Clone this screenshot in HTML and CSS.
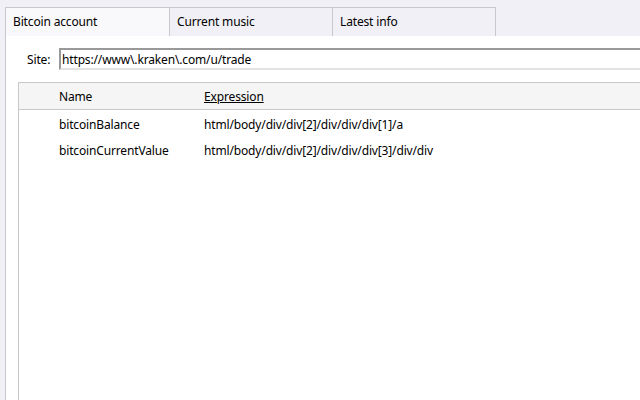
FILE: index.html
```html
<!DOCTYPE html>
<html>
<head>
<meta charset="utf-8">
<link rel="stylesheet" href="styles.css">
</head>
<body>
<div class="window">
  <div class="tabs">
    <div class="tab active">Bitcoin account</div>
    <div class="tab">Current music</div>
    <div class="tab">Latest info</div>
  </div>
  <div class="panel">
    <div class="site-row">
      <label class="site-label">Site:</label>
      <div class="site-input">https://www\.kraken\.com/u/trade</div>
    </div>
    <div class="table">
      <div class="thead">
        <div class="col-name">Name</div>
        <div class="col-expr"><u>Expression</u></div>
      </div>
      <div class="row">
        <div class="col-name">bitcoinBalance</div>
        <div class="col-expr">html/body/div/div[2]/div/div/div[1]/a</div>
      </div>
      <div class="row">
        <div class="col-name">bitcoinCurrentValue</div>
        <div class="col-expr">html/body/div/div[2]/div/div/div[3]/div/div</div>
      </div>
    </div>
  </div>
</div>
</body>
</html>
```
FILE: styles.css
```css
html, body {
  margin: 0;
  padding: 0;
  width: 640px;
  height: 400px;
  overflow: hidden;
  background: #f0f0f6;
  font-family: "Noto Sans", "Open Sans", sans-serif;
  font-size: 12px;
  letter-spacing: -0.15px;
  color: #000;
}
.window {
  display: flex;
  flex-direction: column;
  height: 400px;
  padding: 7px 0 0 5px;
  box-sizing: border-box;
}
.tabs {
  display: flex;
  height: 29px;
}
.tab {
  width: 164px;
  box-sizing: border-box;
  border: 1px solid #c8c8cc;
  border-bottom: none;
  margin-right: -1px;
  padding: 6px 0 0 7px;
  background: #f0f0f6;
  line-height: 16px;
}
.tab.active {
  background: #f9f9fb;
  width: 165px;
}
.panel {
  flex: 1;
  background: #fff;
  border-left: 1px solid #c8c8cc;
  display: flex;
  flex-direction: column;
}
.site-row {
  display: flex;
  align-items: center;
  margin-top: 12px;
  height: 22px;
}
.site-label {
  width: 53px;
  padding-left: 21px;
  box-sizing: border-box;
}
.site-input {
  flex: 1;
  height: 22px;
  box-sizing: border-box;
  border-top: 2px solid #999;
  border-left: 2px solid #999;
  border-bottom: 2px solid #e3e3e3;
  padding: 1px 0 0 1px;
  line-height: 18px;
}
.table {
  flex: 1;
  margin: 12px 0 0 12px;
  border-left: 1px solid #c8c8cc;
  border-top: 1px solid #c8c8cc;
}
.thead {
  display: flex;
  height: 26px;
  align-items: center;
  background: #f5f5f5;
  border-bottom: 1px solid #c8c8cc;
}
.row {
  display: flex;
  height: 26px;
  align-items: center;
}
.thead + .row {
  margin-top: 1px;
}
.col-name {
  width: 185px;
  padding-left: 40px;
  box-sizing: border-box;
}
.col-expr {
  flex: 1;
}
```
